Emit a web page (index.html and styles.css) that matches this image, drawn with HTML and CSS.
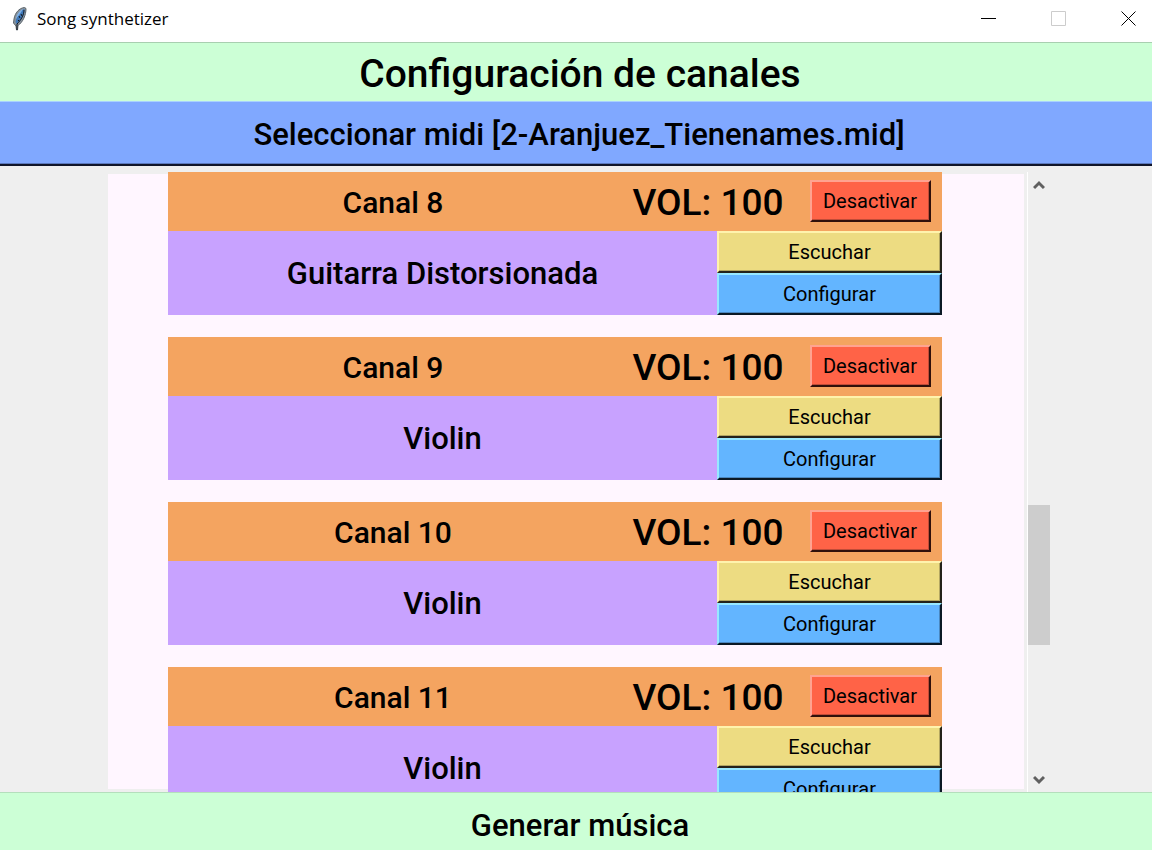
FILE: index.html
```html
<!DOCTYPE html>
<html lang="es">
<head>
<meta charset="utf-8">
<title>Song synthetizer</title>
<link rel="stylesheet" href="styles.css">
</head>
<body>
<div class="window">
  <header class="titlebar">
    <svg class="feather" viewBox="0 0 16 26" aria-hidden="true">
      <path d="M12.500 1.500C7 2 3 7 2 13l-.5 4L4 20l.5 4h1L6 19.500C11 16 14 9 14 2.500z" fill="#8a949c" stroke="#59636b"/>
      <path d="M12 3C8 5 4.500 10 3.500 16l1 2C9 15 13 9 12.500 3z" fill="#3f78b8"/>
      <path d="M11 3C7 5 4.500 9 4 13c2-3 5-6 7-10z" fill="#7fb2e8"/>
      <path d="M12 4c0 5-3 10-7 14v6M7 10l1 2M9 8l1 2M6 14l1 1" fill="none" stroke="#15191f"/>
    </svg>
    <span class="caption">Song synthetizer</span>
    <div class="controls">
      <button class="control" aria-label="Minimizar"><svg viewBox="0 0 16 16"><path d="M0 7.500h15"/></svg></button>
      <button class="control" aria-label="Maximizar" disabled><svg viewBox="0 0 16 16"><path d="M.5 .5h14v14h-14z"/></svg></button>
      <button class="control" aria-label="Cerrar"><svg viewBox="0 0 16 16"><path d="M.5 .5l14 14M14.500 .5l-14 14"/></svg></button>
    </div>
  </header>
  <h1 class="heading">Configuración de canales</h1>
  <button class="midi">Seleccionar midi [2-Aranjuez_Tienenames.mid]</button>
  <main class="workspace">
    <div class="channels">
      <section class="card">
        <div class="card-head"><h2 class="name">Canal 8</h2><span class="volume">VOL: 100</span><button class="btn toggle">Desactivar</button></div>
        <div class="card-body"><p class="instrument">Guitarra Distorsionada</p><div class="actions"><button class="btn listen">Escuchar</button><button class="btn setup">Configurar</button></div></div>
      </section>
      <section class="card">
        <div class="card-head"><h2 class="name">Canal 9</h2><span class="volume">VOL: 100</span><button class="btn toggle">Desactivar</button></div>
        <div class="card-body"><p class="instrument">Violin</p><div class="actions"><button class="btn listen">Escuchar</button><button class="btn setup">Configurar</button></div></div>
      </section>
      <section class="card">
        <div class="card-head"><h2 class="name">Canal 10</h2><span class="volume">VOL: 100</span><button class="btn toggle">Desactivar</button></div>
        <div class="card-body"><p class="instrument">Violin</p><div class="actions"><button class="btn listen">Escuchar</button><button class="btn setup">Configurar</button></div></div>
      </section>
      <section class="card">
        <div class="card-head"><h2 class="name">Canal 11</h2><span class="volume">VOL: 100</span><button class="btn toggle">Desactivar</button></div>
        <div class="card-body"><p class="instrument">Violin</p><div class="actions"><button class="btn listen">Escuchar</button><button class="btn setup">Configurar</button></div></div>
      </section>
    </div>
    <div class="scrollbar">
      <button class="arrow" aria-label="Subir"><svg viewBox="0 0 12 10"><path d="M1 8l5-5 5 5"/></svg></button>
      <div class="track"><div class="thumb"></div></div>
      <button class="arrow" aria-label="Bajar"><svg viewBox="0 0 12 10"><path d="M1 2l5 5 5-5"/></svg></button>
    </div>
  </main>
  <button class="generate">Generar música</button>
</div>
</body>
</html>
```
FILE: styles.css
```css
* { box-sizing: border-box; }
body { margin: 0; }
h1, h2, p { margin: 0; font-weight: inherit; }
button { padding: 0; border: 0; color: inherit; font: inherit; }

.window {
  display: flex;
  flex-direction: column;
  height: 100vh;
  overflow: hidden;
  background: #efefef;
  color: #000;
  font-family: Roboto, "Liberation Sans", sans-serif;
  font-weight: 500;
}

.titlebar {
  display: flex;
  flex: none;
  align-items: center;
  height: 43px;
  padding: 0 15px 4px 12px;
  border-bottom: 1px solid #a8cfb0;
  background: #fff;
}
.feather { width: 16px; height: 26px; margin-right: 9px; }
.caption { font: 17px/24px "Open Sans", "Noto Sans", sans-serif; }
.controls { display: flex; gap: 54px; margin-left: auto; }
.control { width: 16px; height: 16px; background: none; }
.control svg { display: block; fill: none; stroke: #000; }
.control:disabled svg { stroke: #ccc; }

.heading {
  flex: none;
  height: 58px;
  padding-left: 8px;
  background: #ccffd6;
  font-size: 39px;
  line-height: 62px;
  text-align: center;
}
.midi {
  flex: none;
  height: 65px;
  padding: 2px 0 0 6px;
  border-top: 1px solid #a9d2ff;
  border-bottom: 2px solid #10152a;
  background: #80a8ff;
  font-size: 31px;
  box-shadow: inset 0 -1px #5b78bd;
}

.workspace {
  display: flex;
  flex: 1;
  min-height: 0;
  padding: 6px 102px 0 108px;
}
.channels {
  display: flex;
  flex: 1;
  flex-direction: column;
  gap: 22px;
  padding: 0 82px 0 60px;
  overflow: hidden;
  background: linear-gradient(#fff6ff, #fff6ff) no-repeat 0 2px / 100% calc(100% - 5px);
}
.card { flex: none; }
.card-head {
  display: grid;
  grid-template-columns: 1fr 180px 144px;
  align-items: center;
  justify-items: center;
  height: 59px;
  background: #f4a460;
}
.name, .instrument, .volume { padding-top: 2px; }
.name { font-size: 30px; line-height: 40px; }
.instrument { font-size: 31px; line-height: 40px; text-align: center; }
.volume { font-size: 37px; line-height: 48px; }
.card-body {
  display: grid;
  grid-template-columns: 1fr 225px;
  align-items: center;
  background: #c8a2ff;
}
.actions { display: grid; }
.btn {
  height: 42px;
  border: 2px solid #111;
  font-size: 20px;
  font-weight: 400;
}
.toggle {
  width: 121px;
  margin-bottom: 2px;
  border-color: #ffa390 #30100b #30100b #ffa390;
  background: #ff6347;
  box-shadow: inset -1px -1px #c04c38;
}
.listen {
  border-color: #fff3ad #24221a #24221a #fff3ad;
  background: #eddc82;
  box-shadow: inset -1px -1px #b3a662;
}
.setup {
  border-color: #98e8ff #0b1925 #0b1925 #98e8ff;
  background: #63b5ff;
  box-shadow: inset -1px -1px #4a87bf;
}

.scrollbar {
  display: flex;
  flex-direction: column;
  width: 23px;
  margin-left: 3px;
  border-left: 1px solid #fff;
}
.arrow { display: grid; place-items: center; height: 25px; background: none; }
.arrow svg { width: 12px; height: 10px; fill: none; stroke: #606060; stroke-width: 3; }
.track { display: flex; flex: 1; flex-direction: column; }
.track::before { flex: 308; content: ""; }
.track::after { flex: 122; content: ""; }
.thumb { flex: 140; background: #cdcdcd; }

.generate {
  flex: none;
  height: 58px;
  padding: 8px 0 0 8px;
  border-top: 1px solid #b4dfbc;
  background: #ccffd6;
  font-size: 31px;
}
```
